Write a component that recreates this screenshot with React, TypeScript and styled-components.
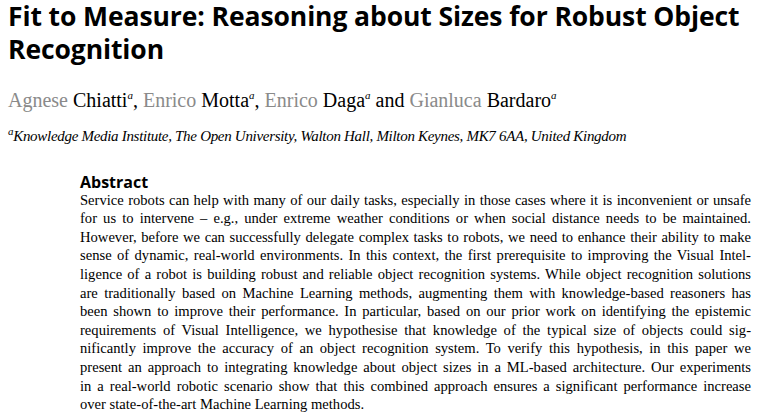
import React from "react";
import styled, { createGlobalStyle } from "styled-components";

const Global = createGlobalStyle`
  body { margin: 0; background: #fff; color: #000; }
`;

const lines = [
  "Service robots can help with many of our daily tasks, especially in those cases where it is inconvenient or unsafe",
  "for us to intervene – e.g., under extreme weather conditions or when social distance needs to be maintained.",
  "However, before we can successfully delegate complex tasks to robots, we need to enhance their ability to make",
  "sense of dynamic, real-world environments. In this context, the first prerequisite to improving the Visual Intel-",
  "ligence of a robot is building robust and reliable object recognition systems. While object recognition solutions",
  "are traditionally based on Machine Learning methods, augmenting them with knowledge-based reasoners has",
  "been shown to improve their performance. In particular, based on our prior work on identifying the epistemic",
  "requirements of Visual Intelligence, we hypothesise that knowledge of the typical size of objects could sig-",
  "nificantly improve the accuracy of an object recognition system.  To verify this hypothesis, in this paper we",
  "present an approach to integrating knowledge about object sizes in a ML-based architecture. Our experiments",
  "in a real-world robotic scenario show that this combined approach ensures a significant performance increase",
  "over state-of-the-art Machine Learning methods.",
];

const authors = [
  ["Agnese", "Chiatti"],
  ["Enrico", "Motta"],
  ["Enrico", "Daga"],
  ["Gianluca", "Bardaro"],
];

const Page = styled.div`
  padding: 0 0 0 8px;
  width: 751px;
  box-sizing: border-box;
`;

const Title = styled.h1`
  margin: 0;
  font-family: "Open Sans", sans-serif;
  font-weight: 700;
  font-size: 26.5px;
  line-height: 33px;
  letter-spacing: -0.1px;
  white-space: nowrap;
`;

const Authors = styled.div`
  margin-top: 16px;
  font-family: "Liberation Serif", serif;
  font-size: 20px;
  line-height: 26px;
  white-space: nowrap;
`;

const First = styled.span`
  color: #8a8a8a;
`;

const Sup = styled.sup`
  font-style: italic;
  font-size: 11px;
`;

const Affil = styled.div`
  margin-top: 12px;
  font-family: "Liberation Serif", "Times New Roman", serif;
  font-style: italic;
  font-size: 15px;
  letter-spacing: -0.3px;
  white-space: nowrap;
`;

const Abstract = styled.section`
  margin: 28px 0 0 72px;
`;

const Heading = styled.h2`
  margin: 0;
  font-family: "Open Sans", sans-serif;
  font-weight: 700;
  font-size: 16px;
  line-height: 18px;
`;

const Line = styled.div<{ $last?: boolean }>`
  font-family: "Liberation Serif", serif;
  font-size: 14.6px;
  line-height: 18.6px;
  text-align: justify;
  text-align-last: ${(p) => (p.$last ? "left" : "justify")};
  white-space: nowrap;
`;

export default function App() {
  return (
    <Page>
      <Global />
      <Title>
        Fit to Measure: Reasoning about Sizes for Robust Object
        <br />
        Recognition
      </Title>
      <Authors>
        {authors.map(([f, l], i) => (
          <React.Fragment key={l}>
            <First>{f}</First> {l}
            <Sup>a</Sup>
            {i < 2 ? ",  " : i === 2 ? " and  " : ""}
          </React.Fragment>
        ))}
      </Authors>
      <Affil>
        <Sup>a</Sup>Knowledge Media Institute, The Open University, Walton Hall, Milton Keynes, MK7 6AA, United Kingdom
      </Affil>
      <Abstract>
        <Heading>Abstract</Heading>
        {lines.map((t, i) => (
          <Line key={i} $last={i === lines.length - 1}>
            {t}
          </Line>
        ))}
      </Abstract>
    </Page>
  );
}
